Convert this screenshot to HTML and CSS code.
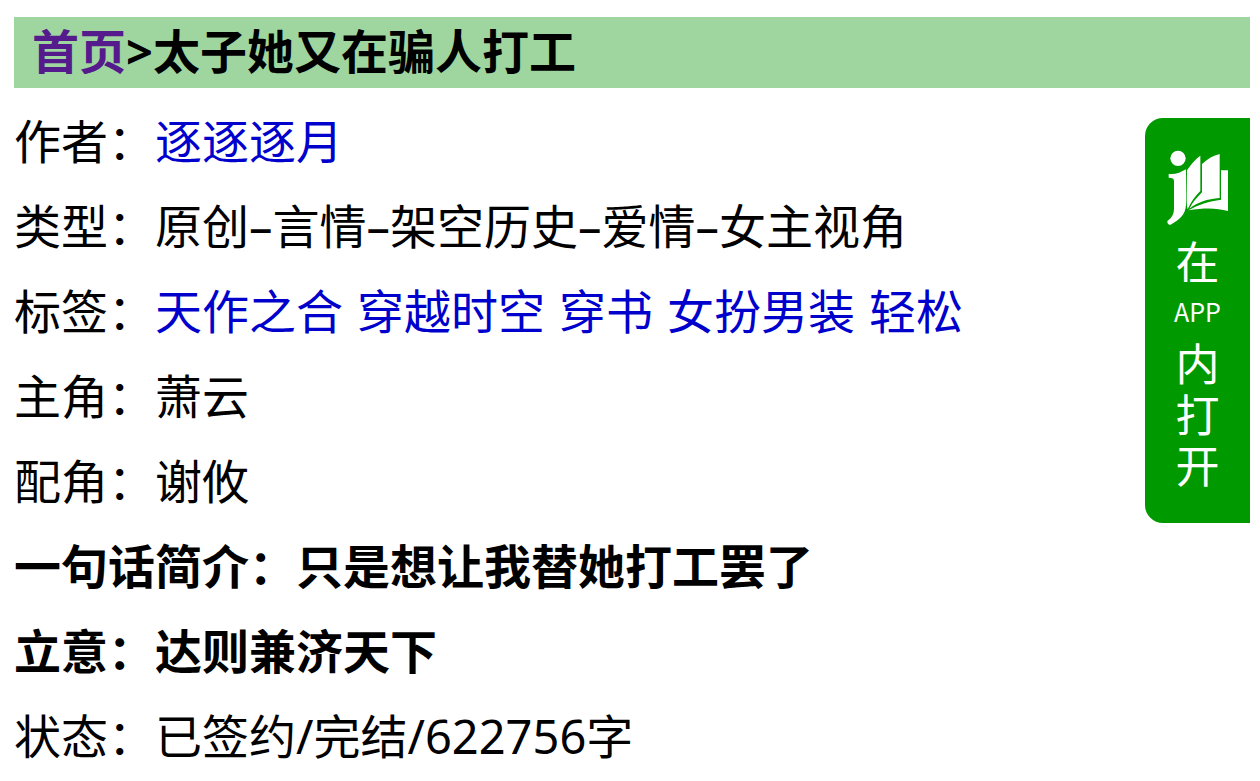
FILE: index.html
```html
<!DOCTYPE html>
<html lang="zh-CN">
<head>
<meta charset="utf-8">
<meta name="viewport" content="width=device-width, initial-scale=1">
<title>太子她又在骗人打工</title>
<link rel="stylesheet" href="styles.css">
</head>
<body>
<main class="page">
  <h1 class="crumbs"><a class="home" href="#">首页</a>&gt;太子她又在骗人打工</h1>
  <ul class="info">
    <li>作者：<a href="#">逐逐逐月</a></li>
    <li>类型：原创–言情–架空历史–爱情–女主视角</li>
    <li class="tags">标签：<span class="tag-list"><a href="#">天作之合</a><a href="#">穿越时空</a><a href="#">穿书</a><a href="#">女扮男装</a><a href="#">轻松</a></span></li>
    <li>主角：萧云</li>
    <li>配角：谢攸</li>
    <li class="strong">一句话简介：只是想让我替她打工罢了</li>
    <li class="strong">立意：达则兼济天下</li>
    <li>状态：已签约/完结/622756字</li>
  </ul>
</main>
<a class="open-app" href="#">
  <svg class="logo" viewBox="30 24 192 234" aria-hidden="true">
    <g fill="#fff">
      <circle cx="66" cy="55" r="23"/>
      <path d="M38 102C60 104 74 97 90 88V192C90 226 66 242 44 254Q34 256 34 243C48 233 54 223 54 204V122Q54 113 38 113Z"/>
      <path d="M93 91C105 73 119 57 133 47V153C117 168 105 186 95 208C91 194 92 177 92 160Z"/>
      <path d="M138 72C155 56 172 47 191 42V174C153 177 126 186 100 206C110 187 122 173 138 157Z"/>
      <path d="M195 91H216V213C181 203 145 203 97 211C126 194 160 184 195 179Z"/>
    </g>
  </svg>
  <span>在</span>
  <span class="latin">APP</span>
  <span>内</span>
  <span>打</span>
  <span>开</span>
</a>
</body>
</html>
```
FILE: styles.css
```css
body {
  margin: 0;
  background: #fff;
  color: #000;
  font-family: "Noto Sans", "Noto Sans CJK SC", sans-serif;
  font-size: 47px;
}

a {
  color: #0000cc;
  text-decoration: none;
}

.page {
  padding: 17px 10px 0 14px;
}

.crumbs {
  margin: 0 0 11px;
  padding: 0 18px 3px;
  background: #9fd6a0;
  font-size: 47px;
  font-weight: 700;
  line-height: 68px;
}

.crumbs .home {
  color: #551a8b;
}

.info {
  margin: 0;
  padding: 0;
  list-style: none;
  line-height: 85px;
}

.info .strong {
  font-weight: 700;
}

.tags {
  display: flex;
}

.tag-list {
  display: flex;
  flex-wrap: wrap;
  column-gap: 14px;
}

.open-app {
  position: fixed;
  top: 118px;
  right: 10px;
  box-sizing: border-box;
  width: 105px;
  padding: 30px 0 33px;
  display: flex;
  flex-direction: column;
  align-items: center;
  border-radius: 18px 0 0 18px;
  background: #009900;
  color: #fff;
  font-family: "Noto Sans CJK SC", sans-serif;
  font-size: 44px;
  line-height: 51px;
}

.open-app .logo {
  width: 64px;
  height: 78px;
  margin-bottom: 9px;
}

.open-app .latin {
  font-size: 25px;
}
```
